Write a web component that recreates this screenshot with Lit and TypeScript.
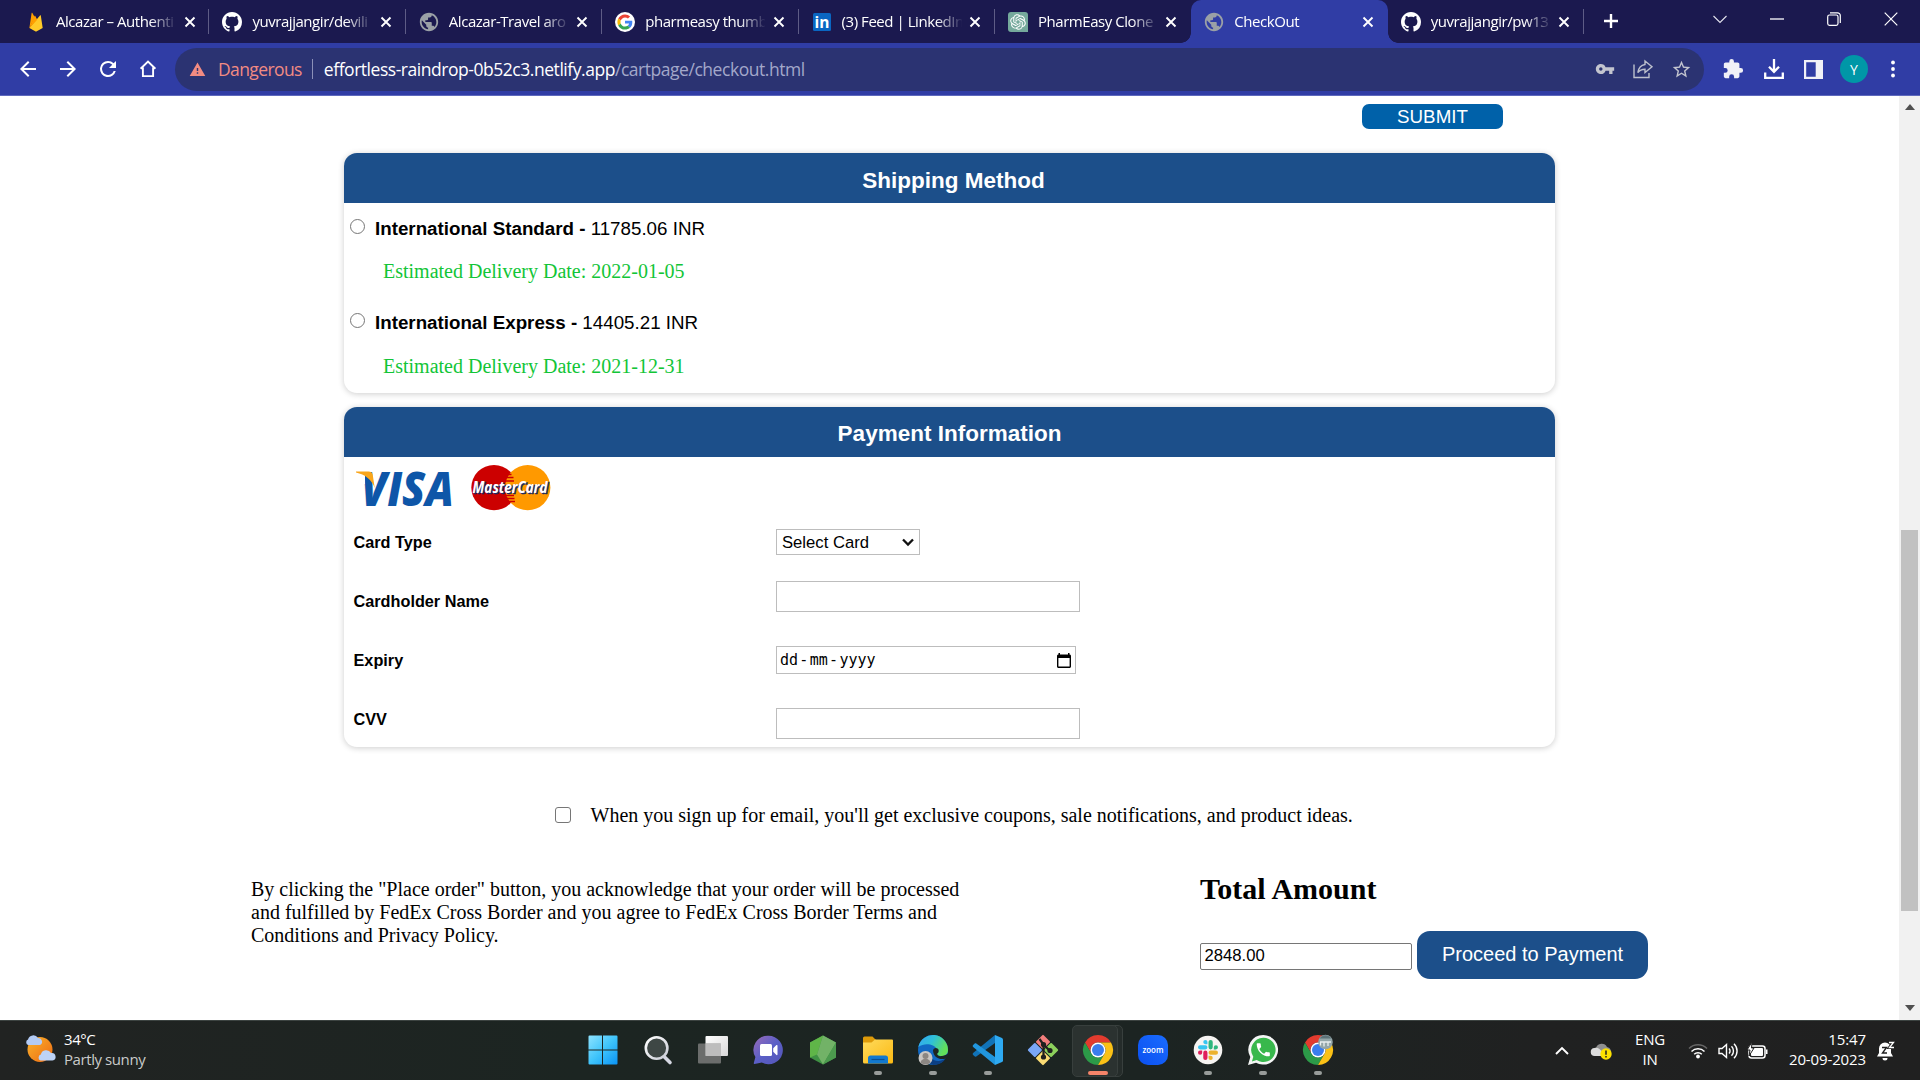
import { LitElement, html, css, svg } from "lit";
import { customElement, state } from "lit/decorators.js";

const P = {
  back: "M20 11H7.83l5.59-5.59L12 4l-8 8 8 8 1.41-1.41L7.83 13H20v-2z",
  forward: "M12 4l-1.41 1.41L16.17 11H4v2h12.17l-5.58 5.59L12 20l8-8z",
  reload: "M17.65 6.35A7.958 7.958 0 0 0 12 4a8 8 0 1 0 7.73 10h-2.08A6 6 0 1 1 12 6c1.66 0 3.14.69 4.22 1.78L13 11h7V4l-2.35 2.35z",
  warning: "M1 21h22L12 2 1 21zm12-3h-2v-2h2v2zm0-4h-2v-4h2v4z",
  key: "M12.65 10A5.99 5.99 0 0 0 7 6c-3.31 0-6 2.69-6 6s2.69 6 6 6a5.99 5.99 0 0 0 5.65-4H17v4h4v-4h2v-4H12.65zM7 14c-1.1 0-2-.9-2-2s.9-2 2-2 2 .9 2 2-.9 2-2 2z",
  star: "M22 9.24l-7.19-.62L12 2 9.19 8.63 2 9.24l5.46 4.73L5.82 21 12 17.27 18.18 21l-1.63-7.03L22 9.24zM12 15.4l-3.76 2.27 1-4.28-3.32-2.88 4.38-.38L12 6.1l1.71 4.04 4.38.38-3.32 2.88 1 4.28L12 15.4z",
  puzzle: "M20.5 11H19V7c0-1.1-.9-2-2-2h-4V3.5a2.5 2.5 0 0 0-5 0V5H4c-1.1 0-1.99.9-1.99 2v3.8H3.5a2.7 2.7 0 0 1 0 5.4H2V20c0 1.1.9 2 2 2h3.8v-1.5a2.7 2.7 0 0 1 5.4 0V22H17c1.1 0 2-.9 2-2v-4h1.5a2.5 2.5 0 0 0 0-5z",
  globe: "M12 2C6.48 2 2 6.48 2 12s4.48 10 10 10 10-4.48 10-10S17.52 2 12 2zm-1 17.93c-3.95-.49-7-3.85-7-7.93 0-.62.08-1.21.21-1.79L9 15v1c0 1.1.9 2 2 2v1.93zm6.9-2.54c-.26-.81-1-1.39-1.9-1.39h-1v-3c0-.55-.45-1-1-1H8v-2h2c.55 0 1-.45 1-1V7h2c1.1 0 2-.9 2-2v-.41c2.93 1.19 5 4.06 5 7.41 0 2.08-.8 3.97-2.1 5.39z",
  github: "M8 0C3.58 0 0 3.58 0 8c0 3.54 2.29 6.53 5.47 7.59.4.07.55-.17.55-.38 0-.19-.01-.82-.01-1.49-2.01.37-2.53-.49-2.69-.94-.09-.23-.48-.94-.82-1.13-.28-.15-.68-.52-.01-.53.63-.01 1.08.58 1.23.82.72 1.21 1.87.87 2.33.66.07-.52.28-.87.51-1.07-1.78-.2-3.64-.89-3.64-3.95 0-.87.31-1.59.82-2.15-.08-.2-.36-1.02.08-2.12 0 0 .67-.21 2.2.82.64-.18 1.32-.27 2-.27s1.36.09 2 .27c1.53-1.04 2.2-.82 2.2-.82.44 1.1.16 1.92.08 2.12.51.56.82 1.27.82 2.15 0 3.07-1.87 3.75-3.65 3.95.29.25.54.73.54 1.48 0 1.07-.01 1.93-.01 2.2 0 .21.15.46.55.38A8.01 8.01 0 0 0 16 8c0-4.42-3.58-8-8-8z",
  openai: "M22.2819 9.8211a5.9847 5.9847 0 0 0-.5157-4.9108 6.0462 6.0462 0 0 0-6.5098-2.9A6.0651 6.0651 0 0 0 4.9807 4.1818a5.9847 5.9847 0 0 0-3.9977 2.9 6.0462 6.0462 0 0 0 .7427 7.0966 5.98 5.98 0 0 0 .511 4.9107 6.051 6.051 0 0 0 6.5146 2.9001A5.9847 5.9847 0 0 0 13.2599 24a6.0557 6.0557 0 0 0 5.7718-4.2058 5.9894 5.9894 0 0 0 3.9977-2.9001 6.0557 6.0557 0 0 0-.7475-7.0729zm-9.022 12.6081a4.4755 4.4755 0 0 1-2.8764-1.0408l.1419-.0804 4.7783-2.7582a.7948.7948 0 0 0 .3927-.6813v-6.7369l2.02 1.1686a.071.071 0 0 1 .038.052v5.5826a4.504 4.504 0 0 1-4.4945 4.4944zm-9.6607-4.1254a4.4708 4.4708 0 0 1-.5346-3.0137l.142.0852 4.783 2.7582a.7712.7712 0 0 0 .7806 0l5.8428-3.3685v2.3324a.0804.0804 0 0 1-.0332.0615L9.74 19.9502a4.4992 4.4992 0 0 1-6.1408-1.6464zM2.3408 7.8956a4.485 4.485 0 0 1 2.3655-1.9728V11.6a.7664.7664 0 0 0 .3879.6765l5.8144 3.3543-2.0201 1.1685a.0757.0757 0 0 1-.071 0l-4.8303-2.7865A4.504 4.504 0 0 1 2.3408 7.872zm16.5963 3.8558L13.1038 8.364 15.1192 7.2a.0757.0757 0 0 1 .071 0l4.8303 2.7913a4.4944 4.4944 0 0 1-.6765 8.1042v-5.6772a.79.79 0 0 0-.407-.667zm2.0107-3.0231l-.142-.0852-4.7735-2.7818a.7759.7759 0 0 0-.7854 0L9.409 9.2297V6.8974a.0662.0662 0 0 1 .0284-.0615l4.8303-2.7866a4.4992 4.4992 0 0 1 6.6802 4.66zM8.3065 12.863l-2.02-1.1638a.0804.0804 0 0 1-.038-.0567V6.0742a4.4992 4.4992 0 0 1 7.3757-3.4537l-.142.0805L8.704 5.459a.7948.7948 0 0 0-.3927.6813zm1.0976-2.3654l2.602-1.4998 2.6069 1.4998v2.9994l-2.5974 1.4997-2.6067-1.4997Z",
  phone: "M6.62 10.79c1.44 2.83 3.76 5.14 6.59 6.59l2.2-2.2c.27-.27.67-.36 1.02-.24 1.12.37 2.33.57 3.57.57.55 0 1 .45 1 1V20c0 .55-.45 1-1 1-9.39 0-17-7.61-17-17 0-.55.45-1 1-1h3.5c.55 0 1 .45 1 1 0 1.25.2 2.45.57 3.57.11.35.03.74-.25 1.02l-2.2 2.2z",
  slack: "M5.042 15.165a2.528 2.528 0 0 1-2.52 2.523A2.528 2.528 0 0 1 0 15.165a2.527 2.527 0 0 1 2.522-2.52h2.52v2.52zM6.313 15.165a2.527 2.527 0 0 1 2.521-2.52 2.527 2.527 0 0 1 2.521 2.52v6.313A2.528 2.528 0 0 1 8.834 24a2.528 2.528 0 0 1-2.521-2.522v-6.313z",
};

const mat = (d: string, size: number, fill: string) =>
  html`<svg width=${size} height=${size} viewBox="0 0 24 24"><path fill=${fill} d=${d}></path></svg>`;

const chromeDisc = svg`
  <path fill="#e33b2e" d="M24 12h20.8A24 24 0 0 0 3.2 12L13.6 30A12 12 0 0 1 24 12z"/>
  <path fill="#2c9a48" d="M13.6 30L3.2 12A24 24 0 0 0 24 48L34.4 30A12 12 0 0 1 13.6 30z"/>
  <path fill="#fbc116" d="M34.4 30L24 48A24 24 0 0 0 44.8 12H24a12 12 0 0 1 10.4 18z"/>
  <circle cx="24" cy="24" r="12" fill="#fff"/><circle cx="24" cy="24" r="9.6" fill="#3b7ded"/>`;

const favicons: Record<string, unknown> = {
  firebase: html`<svg width="20" height="20" viewBox="0 0 20 20">
    <path fill="#ffa000" d="M3.4 15.9L5.6 1.1c.1-.4.6-.5.8-.1l2.3 4.3z"/>
    <path fill="#f57c00" d="M11.2 7.8L8.8 5.2 3.4 15.9z"/>
    <path fill="#ffca28" d="M16.7 15.9L14.8 3.6c0-.4-.5-.5-.8-.2L3.4 15.9l5.8 3.4c.5.3 1.1.3 1.6 0z"/>
    <path fill="#ffa000" d="M11.2 7.8L9.3 3.9c-.2-.3-.7-.3-.8 0L3.4 15.9z"/></svg>`,
  github: html`<svg width="20" height="20" viewBox="0 0 16 16"><path fill="#fff" d=${P.github}></path></svg>`,
  globe: mat(P.globe, 22, "#9aa0a6"),
  google: html`<svg width="20" height="20" viewBox="0 0 20 20"><circle cx="10" cy="10" r="10" fill="#fff"/>
    <g transform="translate(2.4 2.4) scale(.317)">
      <path fill="#EA4335" d="M24 9.5c3.54 0 6.71 1.22 9.21 3.6l6.85-6.85C35.9 2.38 30.47 0 24 0 14.62 0 6.51 5.38 2.56 13.22l7.98 6.19C12.43 13.72 17.74 9.5 24 9.5z"/>
      <path fill="#4285F4" d="M46.98 24.55c0-1.57-.15-3.09-.38-4.55H24v9.02h12.94c-.58 2.96-2.26 5.48-4.78 7.18l7.73 6c4.51-4.18 7.09-10.36 7.09-17.65z"/>
      <path fill="#FBBC05" d="M10.53 28.59c-.48-1.45-.76-2.99-.76-4.59s.27-3.14.76-4.59l-7.98-6.19C.92 16.46 0 20.12 0 24c0 3.88.92 7.54 2.56 10.78l7.97-6.19z"/>
      <path fill="#34A853" d="M24 48c6.48 0 11.93-2.13 15.89-5.81l-7.73-6c-2.15 1.45-4.92 2.3-8.16 2.3-6.26 0-11.57-4.22-13.47-9.91l-7.98 6.19C6.51 42.62 14.62 48 24 48z"/>
    </g></svg>`,
  linkedin: html`<svg width="20" height="20" viewBox="0 0 20 20"><rect x="1" y="1" width="18" height="18" rx="1.5" fill="#0a66c2"/>
    <text x="10" y="15.6" text-anchor="middle" font-family="Open Sans, sans-serif" font-weight="700" font-size="15.5" fill="#fff">in</text></svg>`,
  openai: html`<svg width="20" height="20" viewBox="0 0 20 20"><path fill="#75a99c" d="M3 0h14a3 3 0 0 1 3 3v17H3a3 3 0 0 1-3-3V3a3 3 0 0 1 3-3z"/>
    <path fill="#fff" transform="translate(2.2 2.2) scale(.65)" d=${P.openai}></path></svg>`,
};

const closeX = (color = "#fff") =>
  html`<svg width="12" height="12" viewBox="0 0 12 12"><path d="M1.5 1.5l9 9M10.5 1.5l-9 9" stroke=${color} stroke-width="1.9"/></svg>`;

const appIcons: Record<string, unknown> = {
  start: svg`<defs><linearGradient id="wg" x1="0" y1="0" x2="1" y2="1"><stop offset="0" stop-color="#8ee3ff"/><stop offset=".5" stop-color="#3fc4fb"/><stop offset="1" stop-color="#0a93f5"/></linearGradient></defs>
    <path fill="url(#wg)" d="M1.5 2.5a1 1 0 0 1 1-1H15v14H1.5zM16 1.500h13.500a1 1 0 0 1 1 1v13H16zM1.500 16.500H15v14H2.500a1 1 0 0 1-1-1zM16 16.500h14.500v13a1 1 0 0 1-1 1H16z"/>`,
  search: svg`<defs><linearGradient id="sg" x1="0" y1="0" x2="1" y2="1"><stop offset="0" stop-color="#fff"/><stop offset="1" stop-color="#c9ccd6"/></linearGradient></defs>
    <path d="M22 22.500l6 6" stroke="#d5d7e2" stroke-width="3.600" stroke-linecap="round"/>
    <circle cx="14.600" cy="14" r="10.800" fill="#3e4745" stroke="url(#sg)" stroke-width="2.600"/>`,
  taskview: svg`<defs><linearGradient id="tg" x1="0" y1="0" x2="1" y2="1"><stop offset="0" stop-color="#fff"/><stop offset="1" stop-color="#d8d8d8"/></linearGradient></defs>
    <rect x="8.500" y="2" width="22.500" height="20" rx="1" fill="url(#tg)"/><rect x="1" y="9.500" width="23" height="20" rx="1" fill="#858585" fill-opacity=".75"/><path fill="#bdbdbd" d="M8.500 9.500h15.500V22H8.500z"/>`,
  chat: svg`<defs><linearGradient id="cg" x1="0" y1="0" x2="1" y2="1"><stop offset="0" stop-color="#9a6bb8"/><stop offset=".5" stop-color="#5b5fc7"/><stop offset="1" stop-color="#5456b8"/></linearGradient></defs>
    <path fill="url(#cg)" d="M16.500 1.800a14.200 14.200 0 1 1-6.600 26.700L2.600 30c-.7.100-1-.4-.8-1l1.600-5.900A14.200 14.200 0 0 1 16.500 1.800z"/>
    <rect x="8" y="10" width="12" height="12" rx="1.500" fill="#fff"/><path fill="#fff" d="M21.200 14.200l3-3c.6-.6 1.300-.3 1.300.4v8.800c0 .8-.8 1-1.300.4l-3-3z"/>`,
  node: svg`<path fill="#3f9144" d="M16 1.500L29 8.500v15L16 30.500 3 23.500v-15z"/><path fill="#5fb548" d="M16 1.500L3 8.500v15l7-3z"/><path fill="#72b267" d="M16 1.500L29 8.500 16 30.500l-6-10z"/><path fill="#4c9a4e" d="M29 8.500v15L16 30.500z"/>`,
  explorer: svg`<defs><linearGradient id="fg" x1="0" y1="0" x2="1" y2="1"><stop offset="0" stop-color="#ffdb5c"/><stop offset="1" stop-color="#fbb913"/></linearGradient></defs>
    <path fill="#dd9a09" d="M1 4a1.500 1.500 0 0 1 1.500-1.500h8L14 6v5H1z"/><path fill="url(#fg)" d="M1 8.500h8.500L13 5.500h17a1 1 0 0 1 1 1V28a1.500 1.500 0 0 1-1.500 1.500h-27A1.500 1.500 0 0 1 1 28z"/>
    <path fill="#1279cf" d="M6 29.500V24a2.500 2.500 0 0 1 2.500-2.500h15A2.500 2.500 0 0 1 26 24v5.500z"/><path d="M9.500 25.500h13" stroke="#0b4f92" stroke-width="1.200"/>`,
  edge: svg`<defs><linearGradient id="eg" x1="0" y1="0" x2="1" y2=".4"><stop offset="0" stop-color="#35a7f2"/><stop offset=".5" stop-color="#2fc0d8"/><stop offset="1" stop-color="#62e05a"/></linearGradient></defs>
    <circle cx="16" cy="16" r="15" fill="#1169c4"/><path fill="url(#eg)" d="M1.300 13A15 15 0 0 1 31 16c0 4-3 6-6.500 6-3 0-5-1.200-4.500-2.500.8-1.500.7-3.200-.2-4.600C17.500 10.500 8 8 1.300 13z"/>
    <path fill="#0c3f83" d="M12.500 17c-1.500 6 4 10.500 9.500 10 3-.3 5-1.200 6.800-2.700C26 29 21.500 31.200 16 31 10 29 8.500 22 12.500 17z"/>
    <path fill="#1d2523" d="M16 16.500a2.900 2.900 0 1 1 4.300 3c-.5 1.700 1.700 3 4.400 2.600 2.300-.2 4.300-1 5.800-2.300l1 2.400-2.600 2.200c-5.500 2-12.500-.5-12.900-7.900z"/>
    <circle cx="8.500" cy="24" r="7" fill="#c9c6c3"/><circle cx="8.500" cy="22" r="3" fill="#8b8682"/><path fill="#8b8682" d="M3.500 28.500a5.200 5.200 0 0 1 10 0 7 7 0 0 1-10 0z"/>`,
  vscode: svg`<path fill="#1173b8" d="M23 1L1.100 19a1.400 1.400 0 0 0 0 2l1.400 1.300c.5.500 1.200.5 1.800.1L23 9z"/>
    <path fill="#2196de" d="M1.100 13a1.400 1.400 0 0 1 0-2l1.400-1.300c.5-.5 1.200-.5 1.800-.1L23 23v8z"/><path fill="#2eaaf2" d="M23 1l7 3c.6.300 1 .9 1 1.600v20.800c0 .7-.4 1.300-1 1.600l-7 3z"/>`,
  git: svg`<g transform="rotate(45 16 16)"><rect x="5" y="5" width="10.500" height="10.500" rx="1" fill="#f27e7c"/><rect x="16.500" y="5" width="10.500" height="10.500" rx="1" fill="#8cd05c"/><rect x="5" y="16.500" width="10.500" height="10.500" rx="1" fill="#7aa7f7"/><rect x="16.500" y="16.500" width="10.500" height="10.500" rx="1" fill="#fbdc74"/></g>
    <path d="M12.500 5l4 5.500v12M16.500 10.500l6 6" stroke="#20201f" stroke-width="2.200" fill="none"/><circle cx="16.500" cy="10.500" r="2.600" fill="#20201f"/><circle cx="16.500" cy="23" r="2.600" fill="#20201f"/><circle cx="23" cy="16.500" r="2.600" fill="#20201f"/>`,
  chrome: svg`<g transform="translate(1 1) scale(.625)">${chromeDisc}</g>`,
  zoom: svg`<defs><linearGradient id="zg" x1="0" y1="1" x2="1" y2="0"><stop offset="0" stop-color="#0b50f0"/><stop offset="1" stop-color="#1a6cff"/></linearGradient></defs>
    <rect x="1" y="1" width="30" height="30" rx="10" fill="url(#zg)"/><text x="16" y="18.600" text-anchor="middle" textLength="21" lengthAdjust="spacingAndGlyphs" font-family="Open Sans, sans-serif" font-weight="600" font-size="8.500" fill="#fff">zoom</text>`,
  slack: svg`<circle cx="16" cy="16" r="14.300" fill="#f6f4f2"/><g transform="translate(6 6) scale(.833)">
    <path fill="#e01e5a" d=${P.slack}/><path fill="#36c5f0" transform="rotate(90 12 12)" d=${P.slack}/><path fill="#2eb67d" transform="rotate(180 12 12)" d=${P.slack}/><path fill="#ecb22e" transform="rotate(270 12 12)" d=${P.slack}/></g>`,
  whatsapp: svg`<path fill="#f4f6f5" d="M16.300 1A14.800 14.800 0 1 1 9 28.700L1 31l2.300-7.900A14.800 14.800 0 0 1 16.300 1z"/><path fill="#38b84c" d="M16.300 3.700a12.200 12.200 0 1 1-6.600 22.400L4.900 27.400l1.400-4.700A12.200 12.200 0 0 1 16.300 3.700z"/>
    <path fill="#fff" transform="translate(7.500 7) scale(.73)" d=${P.phone}/>`,
  chrome2: svg`<g transform="translate(1 1) scale(.625)">${chromeDisc}</g><circle cx="23.500" cy="8" r="7.300" fill="#93a6a9"/><path d="M17.500 4.500a7.300 7.300 0 0 1 12 0z" fill="#5d7278"/><path d="M18 8h11M18.500 8v3.500M22 8v4.500M26 8v4" stroke="#e8eeee" stroke-width="1.300" fill="none"/>`,
};

@customElement("app-root")
export class AppRoot extends LitElement {
  @state() private tabs = [
    { icon: "firebase", title: "Alcazar – Authenti" },
    { icon: "github", title: "yuvrajjangir/devili" },
    { icon: "globe", title: "Alcazar-Travel aro" },
    { icon: "google", title: "pharmeasy thumb" },
    { icon: "linkedin", title: "(3) Feed | LinkedIn" },
    { icon: "openai", title: "PharmEasy Clone" },
    { icon: "globe", title: "CheckOut", active: true },
    { icon: "github", title: "yuvrajjangir/pw13" },
  ];

  @state() private apps = [
    { id: "start" }, { id: "search" }, { id: "taskview" }, { id: "chat" }, { id: "node" },
    { id: "explorer", run: true }, { id: "edge", run: true }, { id: "vscode", run: true }, { id: "git" },
    { id: "chrome", focus: true }, { id: "zoom" }, { id: "slack", run: true }, { id: "whatsapp", run: true }, { id: "chrome2", run: true },
  ] as { id: string; run?: boolean; focus?: boolean }[];

  static styles = css`
    :host { display: flex; flex-direction: column; width: 1920px; height: 1080px; overflow: hidden; background: #fff; color: #000; }
    * { box-sizing: border-box; }
    svg { display: block; flex: none; overflow: visible; }
    .ui { font-family: "Open Sans", "Noto Sans", sans-serif; }

    .strip { display: flex; height: 43px; background: #1b194f; padding-left: 13px; flex: none; }
    .tab { display: flex; align-items: center; width: 196.4px; flex: none; padding-left: 12px; position: relative; color: #fff; }
    .tab::after { content: ""; position: absolute; right: 0; top: 9px; width: 1px; height: 25px; background: #5e5c86; }
    .tab.active { background: #303da5; border-radius: 10px 10px 0 0; }
    .tab.active::before, .tab.active::after { content: ""; position: absolute; top: auto; bottom: 0; width: 10px; height: 10px; }
    .tab.active::before { left: -10px; background: radial-gradient(circle at 0 0, transparent 9.5px, #303da5 10px); }
    .tab.active::after { right: -10px; background: radial-gradient(circle at 100% 0, transparent 9.5px, #303da5 10px); }
    .tab.quiet::after { display: none; }
    .fav { width: 20px; display: flex; justify-content: center; flex: none; margin-left: 1px; }
    .name { width: 120px; margin: -2px 0 0 10px; white-space: nowrap; font-size: 15px; letter-spacing: -0.45px; line-height: 22px; flex: none;
      -webkit-mask-image: linear-gradient(90deg, #000 94px, transparent 121px); mask-image: linear-gradient(90deg, #000 94px, transparent 121px); }
    .x { margin-left: 7.5px; }
    .plus { margin: 13px 0 0 19px; }
    .win { display: flex; margin-left: auto; padding-right: 22px; gap: 43px; align-items: center; height: 37px; }

    .bar { display: flex; align-items: center; height: 53px; flex: none; background: #303da5; border-bottom: 1px solid #5e69bd; padding-left: 16px; }
    .nav { display: flex; gap: 16px; }
    .omni { display: flex; align-items: center; height: 43px; width: 1529px; margin-left: 15px; border-radius: 22px; background: #2b3372; padding: 0 12px 0 14px; font-size: 17.5px; white-space: nowrap; }
    .danger { color: #f28b82; margin-left: 12px; letter-spacing: -0.6px; }
    .vr { width: 1px; height: 20px; background: #8b90b8; margin: 0 11px 0 10px; }
    .url { color: #fff; letter-spacing: -0.46px; }
    .url span { color: #a3a8ca; }
    .omni .acts { margin-left: auto; display: flex; gap: 18px; align-items: center; }
    .right { display: flex; align-items: center; margin-left: 18px; }
    .avatar { width: 28px; height: 28px; border-radius: 50%; background: #0097a7; color: #fff; font-size: 14px; display: flex; align-items: center; justify-content: center; }
    .r1 { margin-left: 20px; }
    .r2 { margin-left: 17px; }
    .r3 { margin-left: 23px; }

    .view { display: flex; height: 924px; flex: none; }
    .page { flex: 1; display: flex; flex-direction: column; font-family: "Liberation Serif", serif; font-size: 20px; line-height: 23px; }
    .sans { font-family: "Liberation Sans", sans-serif; }
    .submit { margin: 8px 0 0 1362px; width: 141px; height: 25px; border-radius: 7px; background: #0061a9; color: #fff; font-size: 18.75px; line-height: 25px; text-align: center; }
    .card { width: 1211px; margin-left: 344px; border-radius: 13px; box-shadow: 0 1px 6px rgba(0,0,0,.2); overflow: hidden; flex: none; }
    .card h2 { margin: 0; height: 50px; background: #1c4f8a; color: #fff; font-size: 22.5px; line-height: 26px; text-align: center; font-weight: 700; }
    .ship { margin-top: 24px; height: 240px; }
    .ship h2 { padding: 15px 0 0 8px; }
    .pay { margin-top: 14px; height: 340px; }
    .pay h2 { padding-top: 14px; }
    .opt { display: flex; align-items: center; padding-left: 6px; font-size: 18.75px; height: 22px; margin-top: 14px; }
    .opt + .est + .opt { margin-top: 28px; }
    .radio { width: 15px; height: 15px; border: 1px solid #767676; border-radius: 50%; margin: -3px 10px 0 0; }
    .est { color: #12c537; margin: 21px 0 0 39px; height: 23px; }
    .opt + .est + .opt + .est { margin-top: 22px; }
    .logos { display: flex; padding: 7px 0 0 12px; gap: 15px; height: 54px; }
    .form { display: flex; }
    .labels { width: 422px; margin-left: 9.5px; padding-top: 20px; display: flex; flex-direction: column; gap: 37px; font-size: 16.25px; font-weight: 700; line-height: 22px; }
    .fields { margin-left: .5px; padding-top: 18px; display: flex; flex-direction: column; align-items: flex-start; }
    .box { border: 1px solid #bdbdbd; background: #fff; width: 304px; height: 31px; }
    .select { display: flex; width: 144px; height: 26px; align-items: center; justify-content: space-between; padding: 0 5px; font-size: 16.67px; margin-bottom: 26px; }
    .date { display: flex; width: 300px; height: 28px; margin: 34px 0; align-items: center; padding: 0 4px 0 3px; font-family: "DejaVu Sans Mono", monospace; font-size: 15px; }
    .date i { font-style: normal; margin: 0 1.3px; }
    .date svg { margin-left: auto; }

    .mail { display: flex; align-items: center; margin: 57px 0 0 555px; height: 23px; }
    .check { width: 16px; height: 16px; border: 1px solid #767676; border-radius: 3px; margin: -1px 19.5px 0 0; }
    .end { display: flex; margin-top: 42px; }
    .legal { width: 750px; margin: 9px 0 0 251px; }
    .total { margin-left: 199px; }
    .total h1 { margin: 0; font-size: 30px; line-height: 34px; padding-top: 3px; }
    .payrow { display: flex; align-items: center; gap: 5px; margin-top: 25px; }
    .amount { width: 212px; height: 27px; border: 1.500px solid #767676; border-radius: 2px; font-size: 16.67px; line-height: 24px; padding-left: 3.5px; margin-top: 3px; }
    .proceed { width: 231px; height: 48px; border-radius: 13px; background: #1c4f8a; color: #fff; font-size: 20px; line-height: 46px; text-align: center; }

    .scroll { width: 21px; background: #f1f1f1; display: flex; flex-direction: column; align-items: center; padding: 8px 0 9px; }
    .thumb { width: 17px; height: 381px; margin-top: 420px; background: #c1c1c1; }
    .scroll svg:last-child { margin-top: auto; }

    .task { height: 60px; flex: none; display: flex; align-items: center; border-top: 1px solid #3c4341; background: linear-gradient(90deg, #212322 0, #1c2522 30%, #1c2422 60%, #202121 80%, #202020 100%); color: #fff; font-size: 15px; line-height: 20px; }
    .weather { display: flex; width: 575px; padding-left: 25px; align-items: center; gap: 9px; letter-spacing: -0.42px; }
    .weather svg { margin-top: -3px; }
    .weather div { margin-top: -4px; }
    .weather span { color: #c9cbca; }
    .apps { display: flex; }
    .app { width: 55px; height: 59px; display: flex; flex-direction: column; align-items: center; padding-top: 13px; position: relative; }
    .dot { width: 8px; height: 4px; border-radius: 2px; background: #989c9a; margin-top: 5px; }
    .focus .dot { width: 20px; background: #f58469; }
    .focus::before, .focus::after { content: ""; position: absolute; top: 4px; height: 50px; border-radius: 5px; background: #2b3230; border: 1px solid #383f3d; }
    .focus::before { left: 9px; width: 42px; background: #252c2a; }
    .focus::after { left: 2px; width: 44px; }
    .focus > * { z-index: 1; position: relative; }
    .tray { margin-left: auto; display: flex; align-items: center; padding-right: 25px; }
    .cloud { margin-left: 22px; }
    .tray .lang { text-align: center; width: 34px; margin: -3px 21px 0 20px; letter-spacing: -0.2px; }
    .sound { margin-left: 10px; }
    .battery { margin-left: 9px; }
    .tray .time { text-align: right; width: 90px; margin: -4px 11px 0 7px; letter-spacing: -0.12px; }
  `;

  private renderTab(t: { icon: string; title: string; active?: boolean }, i: number) {
    const quiet = this.tabs[i + 1]?.active;
    return html`<div class="tab ${t.active ? "active" : ""} ${quiet ? "quiet" : ""}">
      <div class="fav">${favicons[t.icon]}</div>
      <div class="name">${t.title}</div>
      <div class="x">${closeX()}</div>
    </div>`;
  }

  render() {
    return html`
      <div class="strip ui">
        ${this.tabs.map((t, i) => this.renderTab(t, i))}
        <svg class="plus" width="16" height="16" viewBox="0 0 16 16"><path d="M8 1v14M1 8h14" stroke="#fff" stroke-width="2.4"/></svg>
        <div class="win">
          <svg width="14" height="14" viewBox="0 0 14 14"><path d="M.5 4l6.500 6.500L13.500 4" fill="none" stroke="#e4e4ee" stroke-width="1.100"/></svg>
          <svg width="14" height="14" viewBox="0 0 14 14"><path d="M0 7h14" stroke="#fff" stroke-width="1.300"/></svg>
          <svg width="14" height="14" viewBox="0 0 14 14"><rect x=".7" y="3" width="10.300" height="10.300" rx="1.800" fill="none" stroke="#fff" stroke-width="1.200"/><path d="M3 .8h7.500a2.800 2.800 0 0 1 2.800 2.800V11" fill="none" stroke="#fff" stroke-width="1.200"/></svg>
          <svg width="14" height="14" viewBox="0 0 14 14"><path d="M.7.7l12.600 12.600M13.300.7L.7 13.300" stroke="#fff" stroke-width="1.200"/></svg>
        </div>
      </div>

      <div class="bar ui">
        <div class="nav">
          ${mat(P.back, 24, "#fff")} ${mat(P.forward, 24, "#fff")} ${mat(P.reload, 24, "#fff")}
          <svg width="24" height="24" viewBox="0 0 24 24"><path d="M4.600 11.700L12 4.600l7.400 7.100M6.900 10.500v8.600h10.200v-8.600" fill="none" stroke="#fff" stroke-width="1.900"/></svg>
        </div>
        <div class="omni">
          ${mat(P.warning, 17, "#f28b82")}
          <span class="danger">Dangerous</span><div class="vr"></div>
          <span class="url">effortless-raindrop-0b52c3.netlify.app<span>/cartpage/checkout.html</span></span>
          <div class="acts">
            ${mat(P.key, 20, "#c3c5cf")}
            <svg width="20" height="20" viewBox="0 0 20 20" fill="none" stroke="#bdc0cd" stroke-width="1.400"><path d="M1 5.500v13h15v-4.500"/><path d="M12 2l7 5.700-7 5.800v-3.200c-3.300 0-5.500 1.100-7.200 3.400.7-4.500 3.100-7.600 7.200-8.200z"/></svg>
            ${mat(P.star, 21, "#c3c5cf")}
          </div>
        </div>
        <div class="right">
          ${mat(P.puzzle, 22, "#f1f1f7")}
          <svg class="r1" width="20" height="20" viewBox="0 0 20 20" fill="none" stroke="#fff" stroke-width="2.300"><path d="M10 0v12.500M5 7.800l5 5 5-5M1.200 13.500v5.300h17.600v-5.300"/></svg>
          <svg class="r1" width="19" height="19" viewBox="0 0 19 19"><path fill="#f1f1f7" fill-rule="evenodd" d="M0 0h19v19H0zM2.200 2.200v14.600h9.500V2.200z"/></svg>
          <div class="avatar r2">Y</div>
          <svg class="r3" width="4" height="18" viewBox="0 0 4 18"><circle cx="2" cy="2.500" r="1.900" fill="#fff"/><circle cx="2" cy="9" r="1.900" fill="#fff"/><circle cx="2" cy="15.500" r="1.900" fill="#fff"/></svg>
        </div>
      </div>

      <div class="view">
        <div class="page">
          <div class="submit sans">SUBMIT</div>
          <section class="card ship">
            <h2 class="sans">Shipping Method</h2>
            <div class="opt sans"><div class="radio"></div><b>International Standard -&nbsp;</b>11785.06 INR</div>
            <div class="est">Estimated Delivery Date: 2022-01-05</div>
            <div class="opt sans"><div class="radio"></div><b>International Express -&nbsp;</b>14405.21 INR</div>
            <div class="est">Estimated Delivery Date: 2021-12-31</div>
          </section>
          <section class="card pay">
            <h2 class="sans">Payment Information</h2>
            <div class="logos">
              <svg width="100" height="48" viewBox="0 0 100 48">
                <text x="5" y="41.500" textLength="93" lengthAdjust="spacingAndGlyphs" font-family="Open Sans, sans-serif" font-weight="800" font-style="italic" font-size="47" fill="#0e56a8">VISA</text>
                <path fill="#fff" d="M0 6h9v14H0z"/>
                <path fill="#f9a51a" d="M0 7.500h12.500c2.500 0 3.800 1 4.200 3l2 13.500C16 16 9 10.500 0 8.600z"/>
              </svg>
              <svg width="80" height="47" viewBox="0 0 80 47">
                <circle cx="23" cy="23.600" r="22.700" fill="#c00"/><circle cx="56.700" cy="23.600" r="22.700" fill="#f90"/>
                <path d="M33.500 10.500h7M33.500 13.500h9M33 17h10M33 31.500h10M33.500 34.500h10M35 37.500h9" stroke="#c00" stroke-width="1.700"/>
                <text x="2.700" y="29.700" textLength="75" lengthAdjust="spacingAndGlyphs" font-family="Open Sans, sans-serif" font-weight="700" font-style="italic" font-size="15.500" fill="#1b2a63" stroke="#1b2a63" stroke-width=".6">MasterCard</text>
                <text x="1.500" y="28.800" textLength="75" lengthAdjust="spacingAndGlyphs" font-family="Open Sans, sans-serif" font-weight="700" font-style="italic" font-size="15.500" fill="#fff">MasterCard</text>
              </svg>
            </div>
            <div class="form sans">
              <div class="labels"><span>Card Type</span><span>Cardholder Name</span><span>Expiry</span><span>CVV</span></div>
              <div class="fields">
                <div class="box select">Select Card<svg width="13" height="9" viewBox="0 0 13 9"><path d="M2 1.500l5 5 5-5" fill="none" stroke="#111" stroke-width="2.300"/></svg></div>
                <div class="box"></div>
                <div class="box date">dd<i>-</i>mm<i>-</i>yyyy<svg width="14" height="15" viewBox="0 0 14 15"><path fill="#000" fill-rule="evenodd" d="M1.500 0h1.500v1.500h8V0h1.500v1.500c.8 0 1.500.6 1.500 1.400V13.500c0 .8-.7 1.500-1.500 1.500h-11C.7 15 0 14.300 0 13.500V2.900c0-.8.7-1.400 1.500-1.400zM1.400 5v8.600h11.200V5z"/></svg></div>
                <div class="box"></div>
              </div>
            </div>
          </section>
          <div class="mail"><div class="check"></div>When you sign up for email, you'll get exclusive coupons, sale notifications, and product ideas.</div>
          <div class="end">
            <div class="legal">By clicking the "Place order" button, you acknowledge that your order will be processed<br />and fulfilled by FedEx Cross Border and you agree to FedEx Cross Border Terms and<br />Conditions and Privacy Policy.</div>
            <div class="total">
              <h1>Total Amount</h1>
              <div class="payrow sans"><div class="amount">2848.00</div><div class="proceed">Proceed to Payment</div></div>
            </div>
          </div>
        </div>
        <div class="scroll">
          <svg width="10" height="6" viewBox="0 0 10 6"><path fill="#505050" d="M5 0l5 6H0z"/></svg>
          <div class="thumb"></div>
          <svg width="10" height="6" viewBox="0 0 10 6"><path fill="#505050" d="M0 0h10L5 6z"/></svg>
        </div>
      </div>

      <div class="task ui">
        <div class="weather">
          <svg width="30" height="30" viewBox="0 0 30 30">
            <defs><linearGradient id="sun" x1="0" y1="0" x2="1" y2="1"><stop offset="0" stop-color="#f9b32c"/><stop offset="1" stop-color="#ee6a12"/></linearGradient></defs>
            <circle cx="15" cy="15.500" r="12.500" fill="url(#sun)"/>
            <path fill="#b3cbf5" d="M3 11a3 3 0 0 1 0-5.500A5.500 5.500 0 0 1 13 4a3.700 3.700 0 0 1 2 7z"/>
            <path fill="#bdd3f7" d="M15.500 26.500a3.200 3.200 0 0 1 .3-6A5.500 5.500 0 0 1 26 19a3.800 3.800 0 0 1 1.500 7.500z"/>
          </svg>
          <div>34°C<br /><span>Partly sunny</span></div>
        </div>
        <div class="apps">
          ${this.apps.map(a => html`<div class="app ${a.focus ? "focus" : ""}">
            <svg width="32" height="32" viewBox="0 0 32 32">${appIcons[a.id]}</svg>
            ${a.run || a.focus ? html`<div class="dot"></div>` : ""}
          </div>`)}
        </div>
        <div class="tray">
          <svg width="14" height="9" viewBox="0 0 14 9"><path d="M1 8l6-6 6 6" fill="none" stroke="#fff" stroke-width="1.900"/></svg>
          <svg class="cloud" width="22" height="18" viewBox="0 0 22 18"><path fill="#8f8f8f" d="M5 6a6 6 0 0 1 11-1 5 5 0 0 1 3 8H5z"/><path fill="#dcdcdc" d="M4 14a4 4 0 0 1-.5-8c2-.5 4 0 5.500 1.500L15 14z"/><circle cx="15" cy="12" r="5.700" fill="#fce100"/><path d="M15 8.500v4.200M15 14v1.500" stroke="#222" stroke-width="1.500"/></svg>
          <div class="lang">ENG<br />IN</div>
          <svg width="20" height="16" viewBox="0 0 20 16" fill="none" stroke-width="1.500"><path d="M1 5.500a12.800 12.800 0 0 1 18 0" stroke="#666"/><path d="M3.500 8.500a9.200 9.200 0 0 1 13 0M6.200 11.200a5.400 5.400 0 0 1 7.600 0" stroke="#fff"/><circle cx="10" cy="13.500" r="1.900" fill="#fff"/></svg>
          <svg class="sound" width="20" height="18" viewBox="0 0 20 18" fill="none" stroke="#fff" stroke-width="1.400"><path d="M1 6.500v5h3l4.500 4V2.500L4 6.500zM11 6.500a3.500 3.500 0 0 1 0 5M13.500 4.200a6.800 6.800 0 0 1 0 9.600M16 1.800a10 10 0 0 1 0 14.400"/></svg>
          <svg class="battery" width="22" height="18" viewBox="0 0 22 18"><rect x="2" y="4" width="16" height="12" rx="2.500" fill="none" stroke="#fff" stroke-width="1.500"/><rect x="4" y="6" width="12" height="8" rx="1" fill="#fff"/><path fill="#fff" d="M19 7.500h1.500v4.500H19z"/><path fill="#fff" stroke="#202020" stroke-width="1" d="M5 0L0 8h3l-1 6 5-8H4.500z"/></svg>
          <div class="time">15:47<br />20-09-2023</div>
          <svg width="18" height="20" viewBox="0 0 18 20"><path fill="#fff" d="M8 1.500a6 6 0 0 1 6 6V12l2 3.500H0L2 12V7.500a6 6 0 0 1 6-6zM5.500 17h5a2.500 2.500 0 0 1-5 0z"/><path d="M12 1.500h4.500L12.500 6.500H17" fill="none" stroke="#202020" stroke-width="3"/><path d="M12 1.500h4.500L12.500 6.500H17" fill="none" stroke="#fff" stroke-width="1.300"/><path d="M5 6.500h4.500l-4 5.500H10" fill="none" stroke="#202020" stroke-width="1.400"/></svg>
        </div>
      </div>
    `;
  }
}
